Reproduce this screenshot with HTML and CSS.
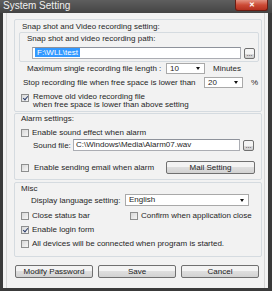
FILE: index.html
```html
<!DOCTYPE html>
<html lang="en">
<head>
<meta charset="UTF-8">
<title>System Setting</title>
<link rel="stylesheet" href="styles.css">
</head>
<body>

<div class="window">
  <div class="titlebar">
    <span class="title">System Setting</span>
    <span class="close">✕</span>
  </div>

  <div class="client">
    <div class="panel">

      <div class="group snap">
        <div class="caption">Snap shot and Video recording setting:</div>
        <div class="group path">
          <div class="caption">Snap shot and video recording path:</div>
          <div class="row path-row">
            <div class="input"><span class="sel">F:\WLL\test</span></div>
            <button class="dots">...</button>
          </div>
        </div>
        <div class="row row-max">
          <span class="lbl-max">Maximum single recording file length :</span>
          <div class="combo c-max">10</div>
          <span class="unit">Minutes</span>
        </div>
        <div class="row row-stop">
          <span class="lbl-stop">Stop recording file when free space is lower than</span>
          <div class="combo c-stop">20</div>
          <span class="unit pct">%</span>
        </div>
        <div class="check remove">
          <span class="box on"></span>
          <span>Remove old video recording file<br>when free space is lower than above setting</span>
        </div>
      </div>

      <div class="group alarm">
        <div class="caption">Alarm settings:</div>
        <div class="check row-sound">
          <span class="box"></span>
          <span>Enable sound effect when alarm</span>
        </div>
        <div class="row row-file">
          <span class="lbl-file">Sound file:</span>
          <div class="input">C:\Windows\Media\Alarm07.wav</div>
          <button class="dots">...</button>
        </div>
        <div class="row row-mail">
          <div class="check">
            <span class="box"></span>
            <span>Enable sending email when alarm</span>
          </div>
          <button class="btn mail">Mail Setting</button>
        </div>
      </div>

      <div class="group misc">
        <div class="caption">Misc</div>
        <div class="row row-lang">
          <span class="lbl-lang">Display language setting:</span>
          <div class="combo c-lang">English</div>
        </div>
        <div class="row row-close">
          <div class="check col1"><span class="box"></span><span>Close status bar</span></div>
          <div class="check"><span class="box"></span><span>Confirm when application close</span></div>
        </div>
        <div class="check row-login"><span class="box on"></span><span>Enable login form</span></div>
        <div class="check row-all"><span class="box"></span><span>All devices will be connected when program is started.</span></div>
      </div>

      <div class="buttons">
        <button class="btn">Modify Password</button>
        <button class="btn">Save</button>
        <button class="btn">Cancel</button>
      </div>

    </div>
  </div>
</div>

</body>
</html>
```

FILE: styles.css
```css
* {
  box-sizing: border-box;
}
body {
  margin: 0;
  font-family: "Liberation Sans", Arial, sans-serif;
  font-size: 8px;
  color: #262626;
}
.window {
  width: 272px;
  height: 291px;
  background: #3a3a3a;
  display: flex;
  flex-direction: column;
}
.titlebar {
  height: 13px;
  display: flex;
  justify-content: space-between;
  align-items: flex-start;
  background: linear-gradient(#5e5e5e, #444);
}
.title {
  color: #f0f0f0;
  font-size: 10px;
  line-height: 10px;
  padding: 1px 0 0 3px;
}
.close {
  width: 33px;
  height: 11px;
  margin-right: 4px;
  background: linear-gradient(#e39281, #cc4a35 50%, #b3301f);
  border: 1px solid #6b1c12;
  border-top: none;
  border-radius: 0 0 3px 3px;
  color: #fff;
  font-size: 7px;
  font-weight: bold;
  line-height: 10px;
  text-align: center;
}
.client {
  flex: 1;
  margin: 0 4px 3px 3px;
  background: #f2f2f2;
  display: flex;
}
.panel {
  flex: 1;
  margin: 0 3px;
  border-left: 1px solid #d6d6d6;
  border-right: 1px solid #d6d6d6;
}

/* group boxes */
.group {
  border: 1px solid #d5dbe0;
  border-radius: 2px;
}
.snap, .alarm, .misc {
  margin: 0 2px 0 7px;
  padding: 0 2px 0 6px;
}
.snap {
  margin-top: 6px;
  padding-bottom: 2px;
}
.caption {
  height: 11px;
  line-height: 11px;
  white-space: nowrap;
}
.snap > .caption {
  margin: 1px 0 0 1px;
}
.path {
  margin-left: -2px;
  padding: 0 3px 2px 7px;
}
.row {
  display: flex;
  align-items: center;
  white-space: nowrap;
}
.path-row {
  margin: 3px 0 0 5px;
  height: 12px;
}
.input {
  flex: 1;
  height: 12px;
  background: #fff;
  border: 1px solid #abadb3;
  border-top-color: #8e929b;
  line-height: 10px;
  padding-left: 2px;
  overflow: hidden;
}
.sel {
  display: inline-block;
  background: #3399ff;
  color: #fff;
  padding: 0 2px;
  line-height: 9px;
}
.dots {
  width: 11px;
  height: 11px;
  margin-left: 3px;
  padding: 0;
  border: 1px solid #707070;
  border-radius: 2px;
  background: linear-gradient(#f4f4f4 50%, #dcdcdc 50%, #d0d0d0);
  font-family: inherit;
  font-size: 7px;
  line-height: 7px;
  color: #222;
}
.row-max {
  margin-top: 1px;
  height: 11px;
}
.lbl-max {
  width: 145px;
  padding-left: 6px;
}
.combo {
  position: relative;
  height: 11px;
  background: #fff;
  border: 1px solid #a9a9a9;
  line-height: 9px;
  padding-left: 3px;
}
.combo::after {
  content: "";
  position: absolute;
  right: 4px;
  top: 3px;
  border-left: 2.5px solid transparent;
  border-right: 2.5px solid transparent;
  border-top: 3px solid #111;
}
.c-max {
  width: 39px;
}
.unit {
  margin-left: 8px;
}
.row-stop {
  margin-top: 3px;
  height: 11px;
}
.lbl-stop {
  width: 183px;
  padding-left: 2px;
}
.c-stop {
  width: 39px;
}
.pct {
  margin-left: 8px;
}

/* check boxes */
.check {
  display: flex;
  align-items: center;
  white-space: nowrap;
}
.box {
  width: 8px;
  height: 8px;
  flex: none;
  margin-right: 3px;
  border: 1px solid #8e8f8f;
  background: linear-gradient(135deg, #d8d8d8, #f6f6f6);
  position: relative;
}
.box.on::after {
  content: "";
  position: absolute;
  left: 2px;
  top: 0;
  width: 2px;
  height: 4px;
  border-right: 1.3px solid #2c3e6b;
  border-bottom: 1.3px solid #2c3e6b;
  transform: rotate(40deg);
}
.remove {
  margin-top: 5px;
  line-height: 8px;
  align-items: flex-start;
}
.remove .box {
  margin-top: 1px;
  margin-right: 4px;
}

/* alarm */
.alarm {
  margin-top: 1px;
  padding-right: 6px;
  padding-bottom: 5px;
}
.alarm > .caption {
  height: 10px;
  line-height: 10px;
}
.row-sound {
  margin-top: 3px;
  height: 11px;
}
.row-file {
  margin-top: 1px;
  height: 12px;
}
.lbl-file {
  width: 52px;
  padding-left: 12px;
}
.row-file .input {
  flex: none;
  width: 167px;
}
.row-mail {
  margin-top: 10px;
  height: 13px;
  justify-content: space-between;
}
.row-mail .box {
  margin-right: 5px;
}
.btn {
  height: 13px;
  padding: 0;
  border: 1px solid #707070;
  border-radius: 2px;
  background: linear-gradient(#f3f3f3 50%, #dedede 50%, #d2d2d2);
  font-family: inherit;
  font-size: 8px;
  color: #222;
}
.mail {
  width: 89px;
}

/* misc */
.misc {
  margin-top: 2px;
  padding-bottom: 7px;
}
.misc > .caption {
  height: 10px;
  line-height: 10px;
  margin-top: 1px;
}
.row-lang {
  height: 12px;
}
.lbl-lang {
  width: 104px;
  padding-left: 10px;
}
.c-lang {
  width: 124px;
  height: 12px;
  line-height: 10px;
}
.c-lang::after {
  top: 4px;
}
.row-close {
  margin-top: 4px;
  height: 11px;
}
.col1 {
  width: 109px;
}
.row-login, .row-all {
  margin-top: 3px;
  height: 11px;
}

/* bottom buttons */
.buttons {
  display: flex;
  gap: 5px;
  margin-top: 8px;
  padding-left: 8px;
}
.buttons .btn {
  width: 78px;
}
```
